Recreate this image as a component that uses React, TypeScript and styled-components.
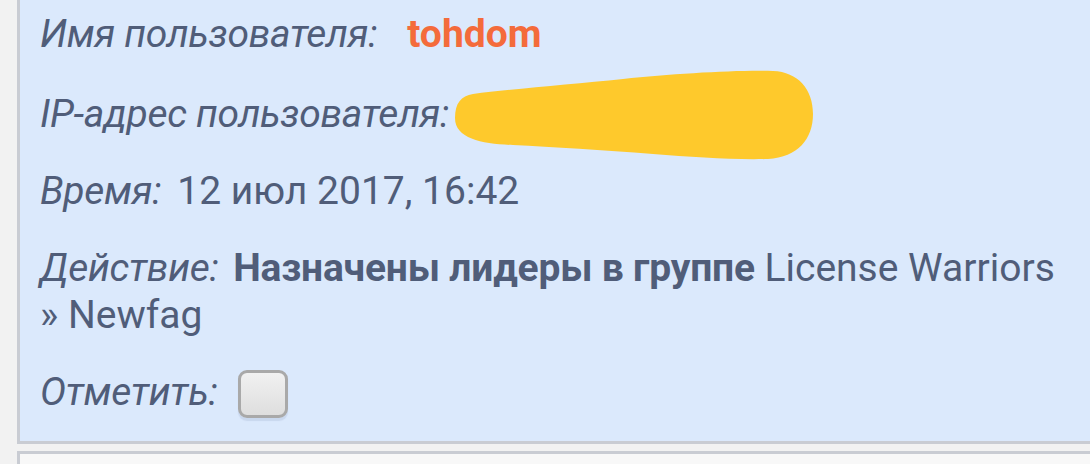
import React from "react";
import styled, { createGlobalStyle } from "styled-components";

const GlobalStyle = createGlobalStyle`
    html, body {
        margin: 0;
        padding: 0;
        background: #f2f2f2;
        overflow: hidden;
    }
    body {
        font-family: Roboto, "Noto Sans", "Liberation Sans", sans-serif;
    }
`;

const colors = {
    text: "#505d79",
    user: "#f46b3b",
    border: "#c9ccd3",
    page: "#f2f2f2",
    highlight: "#dbe9fc",
    plain: "#f8f8f8",
    blot: "#fec92c",
};

const SList = styled.div`
    margin-top: -15px;
    padding-left: 17px;
    display: flex;
    flex-direction: column;
    gap: 7px;
`;

const SCard = styled.div<{ $active?: boolean }>`
    background: ${(p) => (p.$active ? colors.highlight : colors.plain)};
    border: 3px solid ${colors.border};
    border-right: none;
    padding: 8px 20px 7px 20px;
    min-height: 60px;
`;

const SRow = styled.div`
    padding: 15px 0;
    font-size: 39px;
    line-height: 47px;
    color: ${colors.text};
`;

const SLabel = styled.span`
    font-style: italic;
    letter-spacing: -0.3px;
`;

const SValue = styled.span<{ $gap?: number }>`
    margin-left: ${(p) => p.$gap ?? 0}px;
`;

const SUser = styled(SValue)`
    color: ${colors.user};
    font-weight: 700;
`;

const SStrong = styled.strong`
    font-weight: 700;
    letter-spacing: -0.2px;
`;

const SHidden = styled.span`
    position: relative;
    display: inline-block;
    width: 362px;
    height: 1em;
    vertical-align: baseline;
`;

const SBlot = styled.svg`
    position: absolute;
    left: 0;
    top: -21px;
`;

const SCheck = styled.input.attrs({ type: "checkbox" })`
    appearance: none;
    -webkit-appearance: none;
    margin: 0 0 0 20px;
    width: 50px;
    height: 48px;
    box-sizing: border-box;
    border: 3px solid #a9a9a9;
    border-radius: 9px;
    background: linear-gradient(#f1f1f1, #dedede);
    box-shadow: 0 3px 1px rgba(120, 140, 180, 0.18);
    vertical-align: middle;
    position: relative;
    top: -1px;
`;

const Blot = () => (
    <SBlot width="362" height="95" viewBox="0 0 362 95">
        <path
            d="M2 51 C2 36 8 29 20 27 C60 22 120 17 170 12 C220 7 280 3 320 4 C345 5 360 22 360 47 C360 72 345 90 315 92 C280 93 240 90 200 87 C150 83 100 80 60 78 C30 77 2 72 2 51 Z"
            fill={colors.blot}
        />
    </SBlot>
);

export default function App() {
    return (
        <>
            <GlobalStyle />
            <SList>
                <SCard $active>
                    <SRow>
                        <SLabel>Имя пользователя:</SLabel>
                        <SUser $gap={30}>tohdom</SUser>
                    </SRow>
                    <SRow>
                        <SLabel>IP-адрес пользователя:</SLabel>
                        <SValue $gap={4}>
                            <SHidden>
                                <Blot />
                            </SHidden>
                        </SValue>
                    </SRow>
                    <SRow>
                        <SLabel>Время:</SLabel>
                        <SValue $gap={16}>12 июл 2017, 16:42</SValue>
                    </SRow>
                    <SRow>
                        <SLabel>Действие:</SLabel>{" "}
                        <SValue $gap={5}>
                            <SStrong>Назначены лидеры в группе</SStrong> License Warriors » Newfag
                        </SValue>
                    </SRow>
                    <SRow>
                        <SLabel>Отметить:</SLabel>
                        <SCheck />
                    </SRow>
                </SCard>
                <SCard />
            </SList>
        </>
    );
}
